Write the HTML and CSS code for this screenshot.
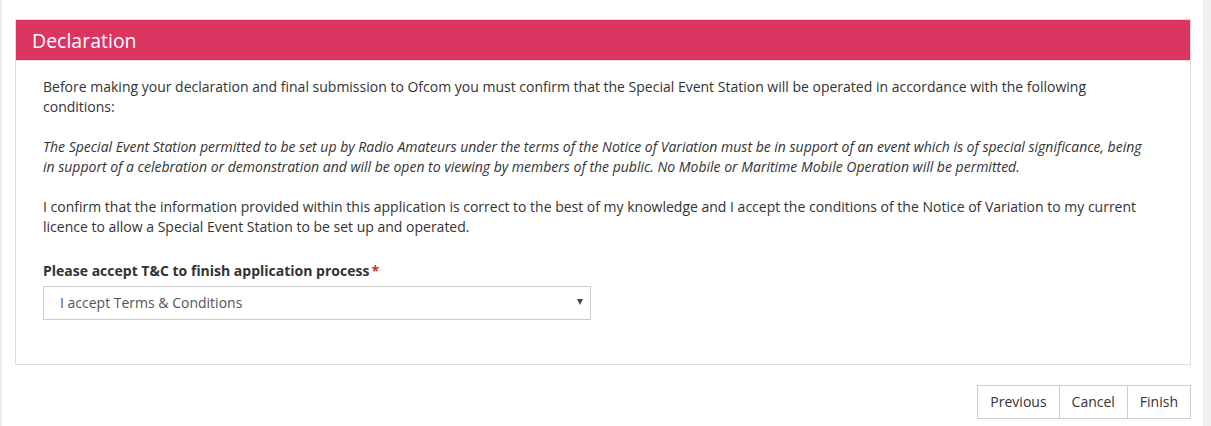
FILE: index.html
```html
<!DOCTYPE html>
<html lang="en">
<head>
<meta charset="utf-8">
<title>Declaration</title>
<link rel="stylesheet" href="styles.css">
</head>
<body>
<div class="frame">
  <div class="edge-left"></div>
  <main class="content">
    <section class="panel">
      <div class="panel-heading">Declaration</div>
      <div class="panel-body">
        <p>Before making your declaration and final submission to Ofcom you must confirm that the Special Event Station will be operated in accordance with the following conditions:</p>
        <p class="italic">The Special Event Station permitted to be set up by Radio Amateurs under the terms of the Notice of Variation must be in support of an event which is of special significance, being in support of a celebration or demonstration and will be open to viewing by members of the public. No Mobile or Maritime Mobile Operation will be permitted.</p>
        <p>I confirm that the information provided within this application is correct to the best of my knowledge and I accept the conditions of the Notice of Variation to my current licence to allow a Special Event Station to be set up and operated.</p>
        <div class="field">
          <label class="field-label">Please accept T&amp;C to finish application process<span class="req">*</span></label>
          <div class="select">
            <span class="select-value">I accept Terms &amp; Conditions</span>
            <span class="select-arrow"></span>
          </div>
        </div>
      </div>
    </section>
    <div class="actions">
      <div class="btn-group">
        <button class="btn">Previous</button>
        <button class="btn">Cancel</button>
        <button class="btn">Finish</button>
      </div>
    </div>
  </main>
  <div class="edge-right"></div>
</div>
</body>
</html>
```

FILE: styles.css
```css
* { box-sizing: border-box; }
html, body { margin: 0; padding: 0; }
body {
  background: #fff;
  font-family: "Open Sans", "Liberation Sans", sans-serif;
  font-size: 14px;
  color: #333;
  line-height: 20px;
}
.frame {
  display: flex;
  height: 426px;
  overflow: hidden;
}
.edge-left {
  width: 2px;
  flex: none;
  background: #ececec;
}
.edge-right {
  width: 8px;
  flex: none;
  background: #f0f0f0;
}
.content {
  flex: 1;
  padding: 19px 12px 0 13px;
}
.panel {
  border: 1px solid #dddddd;
  background: #fff;
}
.panel-heading {
  background: #db3461;
  color: #fff;
  font-size: 19.5px;
  line-height: 42px;
  height: 41px;
  padding: 0 16px;
  border-bottom: 1px solid #dddddd;
}
.panel-body {
  padding: 16px 46px 44px 27px;
}
.panel-body p {
  margin: 0 0 20px;
}
.panel-body p.italic {
  font-style: italic;
}
.field {
  padding-top: 4px;
}
.field-label {
  display: block;
  font-weight: 700;
  margin-bottom: 5px;
}
.req {
  color: #c9302c;
  margin-left: 2px;
}
.select {
  width: 548px;
  height: 34px;
  border: 1px solid #cccccc;
  display: flex;
  align-items: center;
  justify-content: space-between;
  padding: 0 7px 0 16px;
  color: #555;
}
.select-arrow {
  width: 0;
  height: 0;
  border-left: 3px solid transparent;
  border-right: 3px solid transparent;
  border-top: 6px solid #444;
  margin-top: -2px;
}
.actions {
  display: flex;
  justify-content: flex-end;
  padding-top: 20px;
}
.btn-group {
  display: flex;
}
.btn {
  font-family: inherit;
  font-size: 14px;
  color: #333;
  background: #fff;
  border: 1px solid #cccccc;
  height: 34px;
  padding: 0 12px;
  margin: 0;
  line-height: 20px;
}
.btn + .btn {
  margin-left: -1px;
}
```
